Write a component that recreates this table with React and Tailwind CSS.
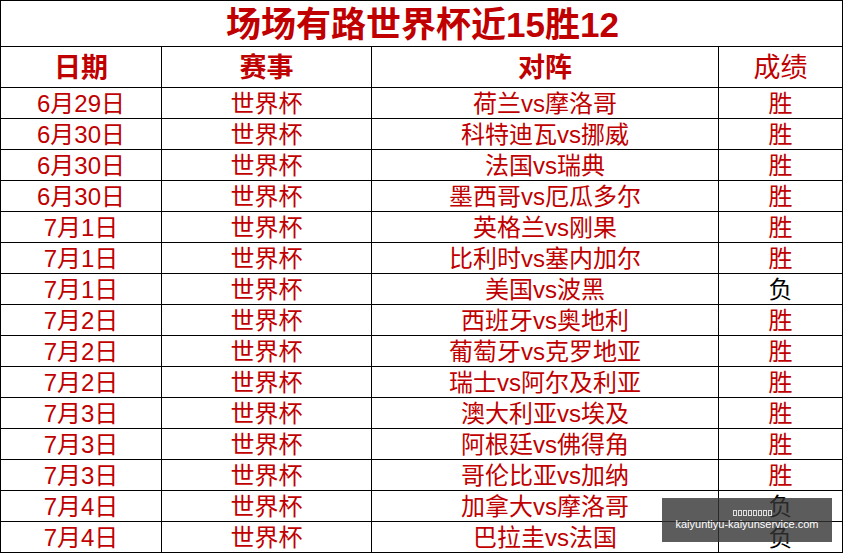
import React from "react";

const rows = [
  ["6月29日", "世界杯", "荷兰vs摩洛哥", "胜"],
  ["6月30日", "世界杯", "科特迪瓦vs挪威", "胜"],
  ["6月30日", "世界杯", "法国vs瑞典", "胜"],
  ["6月30日", "世界杯", "墨西哥vs厄瓜多尔", "胜"],
  ["7月1日", "世界杯", "英格兰vs刚果", "胜"],
  ["7月1日", "世界杯", "比利时vs塞内加尔", "胜"],
  ["7月1日", "世界杯", "美国vs波黑", "负"],
  ["7月2日", "世界杯", "西班牙vs奥地利", "胜"],
  ["7月2日", "世界杯", "葡萄牙vs克罗地亚", "胜"],
  ["7月2日", "世界杯", "瑞士vs阿尔及利亚", "胜"],
  ["7月3日", "世界杯", "澳大利亚vs埃及", "胜"],
  ["7月3日", "世界杯", "阿根廷vs佛得角", "胜"],
  ["7月3日", "世界杯", "哥伦比亚vs加纳", "胜"],
  ["7月4日", "世界杯", "加拿大vs摩洛哥", "负"],
  ["7月4日", "世界杯", "巴拉圭vs法国", "负"],
];

const cell = "flex items-center justify-center border-r border-b border-black leading-none";

export default function App() {
  return (
    <div
      className="relative w-[843px] h-[553px] bg-white overflow-hidden"
      style={{ fontFamily: '"Liberation Sans", "Noto Sans CJK SC", sans-serif' }}
    >
      <div className="w-[843px] border-l border-t border-black">
        {/* title */}
        <div className="flex h-[46px] items-center justify-center border-r border-b border-black">
          <span className="text-[35px] font-bold text-[#c00000] leading-none pt-[2px] pl-[2px]">
            场场有路世界杯近15胜12
          </span>
        </div>

        {/* header */}
        <div className="flex h-[41px] text-[27px] text-[#c00000]">
          <div className={cell + " w-[161px] font-bold pt-[2px]"}>日期</div>
          <div className={cell + " w-[210px] font-bold pt-[2px]"}>赛事</div>
          <div className={cell + " w-[347px] font-bold pt-[2px]"}>对阵</div>
          <div className={cell + " w-[124px] pt-[2px]"}>成绩</div>
        </div>

        {rows.map((r, i) => (
          <div key={i} className="flex h-[31px] text-[24px] text-[#c00000]">
            <div className={cell + " w-[161px] pt-[2px]"}>{r[0]}</div>
            <div className={cell + " w-[210px] pt-[2px]"}>{r[1]}</div>
            <div className={cell + " w-[347px] pt-[2px]"}>{r[2]}</div>
            <div className={cell + " w-[124px] pt-[2px] " + (r[3] === "负" ? "text-black" : "")}>{r[3]}</div>
          </div>
        ))}
      </div>

      {/* watermark */}
      <div className="absolute left-[662px] top-[498px] w-[170px] h-[44px] bg-[#333333]/80 flex flex-col items-center justify-center">
        <div className="flex gap-[1px] ml-[10px] mb-[3px]">
          {Array.from({ length: 8 }).map((_, i) => (
            <span key={i} className="block w-[4px] h-[6px] border border-white/80" />
          ))}
        </div>
        <div className="text-[11px] leading-none text-white" style={{ fontFamily: '"Liberation Sans", sans-serif' }}>
          kaiyuntiyu-kaiyunservice.com
        </div>
      </div>
    </div>
  );
}
